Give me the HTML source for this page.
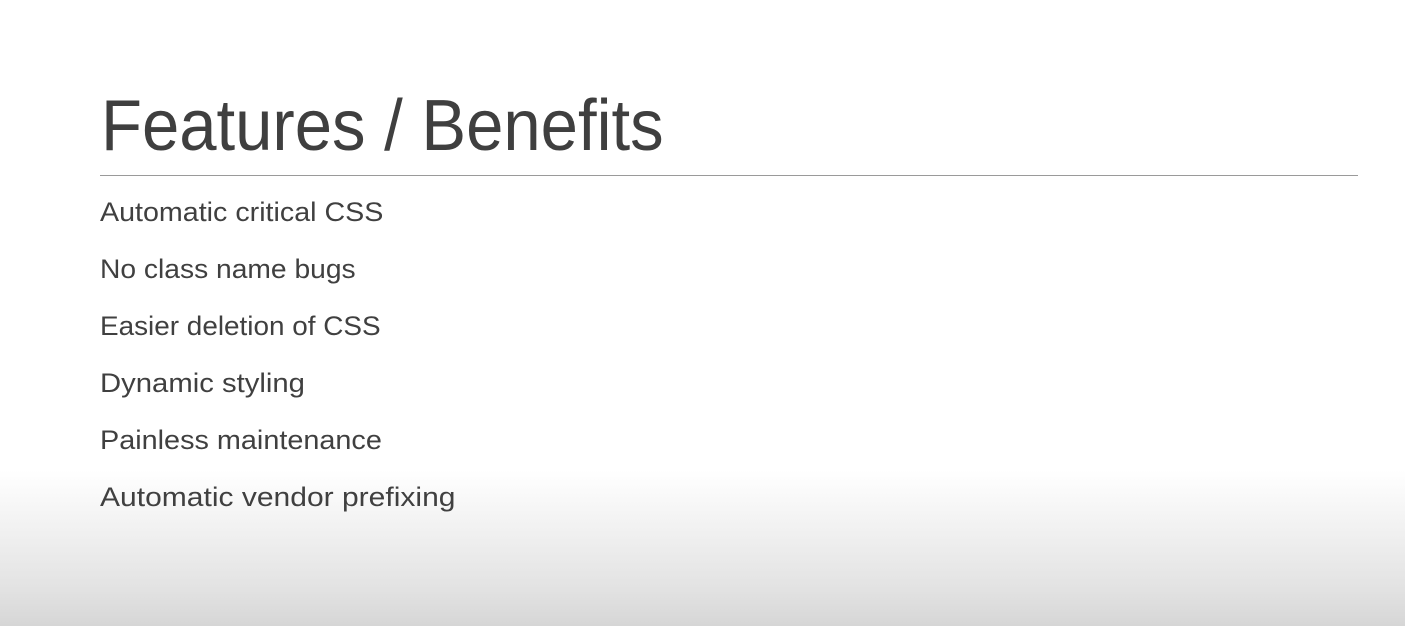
<!DOCTYPE html>
<html><head><meta charset="utf-8"><style>
html,body{margin:0;padding:0;}
body{width:1405px;height:626px;position:relative;overflow:hidden;
background:linear-gradient(to bottom,#fff 0px,#fff 470px,#f1f1f1 530px,#e2e2e2 590px,#d6d6d6 626px);
font-family:"Liberation Sans",sans-serif;color:#404040;}
.t{position:absolute;white-space:nowrap;transform-origin:0 0;}
#title{left:101px;top:84px;font-size:72px;line-height:84px;color:#3f3f3f;}
.hr{position:absolute;left:100px;top:175px;width:1258px;height:1px;background:#9a9a9a;}
.b{font-size:27px;line-height:32px;left:100px;}
</style></head><body>
<div class="t" id="title" style="transform:scaleX(0.931)">Features / Benefits</div>
<div class="hr"></div>
<div class="t b" style="top:196px;transform:scaleX(1.061)">Automatic critical CSS</div>
<div class="t b" style="top:253px;transform:scaleX(1.045)">No class name bugs</div>
<div class="t b" style="top:310px;transform:scaleX(1.033)">Easier deletion of CSS</div>
<div class="t b" style="top:367px;transform:scaleX(1.084)">Dynamic styling</div>
<div class="t b" style="top:424px;transform:scaleX(1.067)">Painless maintenance</div>
<div class="t b" style="top:481px;transform:scaleX(1.112)">Automatic vendor prefixing</div>
</body></html>
